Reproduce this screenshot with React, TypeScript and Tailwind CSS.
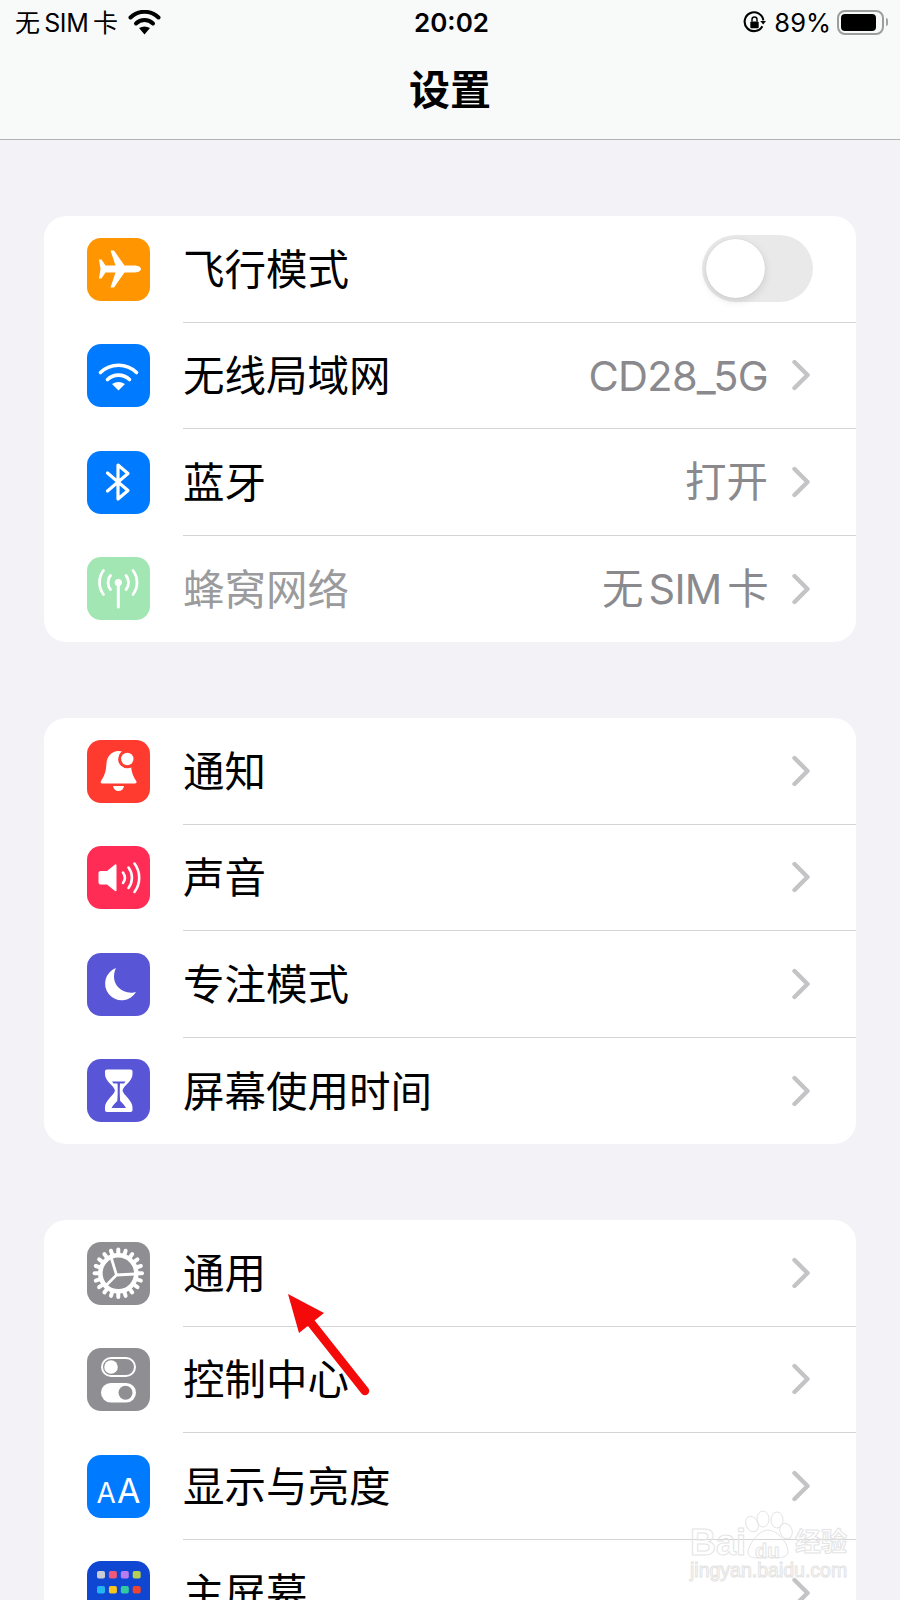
import React from 'react';

// iOS settings icons, all on a 63x63 tile
const Plane = () => (
  <path fill="#fff" d="M54 31C54 28.5 50 27.5 47 27.5H37.5L27 12.5H23.5L28.5 27.5H18.5L14.5 21.5H12L13.5 31L12 40.5H14.5L18.5 34.5H28.5L23.5 49.5H27L37.5 34.5H47C50 34.5 54 33.5 54 31Z" />
);

const Wifi = () => (
  <g fill="none" stroke="#fff" strokeWidth="3.6" strokeLinecap="round">
    <path d="M13.5 28.5A26 26 0 0 1 49.5 28.5" />
    <path d="M20.5 35.5A16 16 0 0 1 42.5 35.5" />
    <path fill="#fff" stroke="none" d="M25 40Q31.5 36 38 40L31.5 46.5Z" />
  </g>
);

const Bluetooth = () => (
  <path fill="none" stroke="#fff" strokeWidth="3.2" strokeLinecap="round" strokeLinejoin="round" d="M20.5 22L41 39.5L31 48V14L41 22.5L20.5 40" />
);

const Antenna = () => (
  <g fill="none" stroke="#fff" strokeWidth="2.8" strokeLinecap="round">
    <circle cx="31.3" cy="25.5" r="3.6" fill="#fff" stroke="none" />
    <path strokeWidth="3" d="M31.3 27V50" />
    <path d="M23.5 18.5A11 11 0 0 0 23.5 32.5" />
    <path d="M39 18.5A11 11 0 0 1 39 32.5" />
    <path d="M16.5 13.5A20 20 0 0 0 16.5 37.5" />
    <path d="M46 13.5A20 20 0 0 1 46 37.5" />
  </g>
);

const Bell = () => (
  <g>
    <path fill="#fff" d="M31.5 11C25 11 20 16 19.5 23C19 31 18 35 14 41C13.2 42.2 14 43.5 15.5 43.5H48C49.4 43.5 50 42.2 49.2 41C46 36 44.5 32 44 26C44 18 38 11 31.5 11Z" />
    <path fill="#fff" d="M26 46H37C36.5 49 34.5 51 31.5 51C28.5 51 26.5 49 26 46Z" />
    <circle cx="40.3" cy="19" r="9.2" fill="#ff3b30" />
    <circle cx="40.3" cy="19" r="6.2" fill="#fff" />
  </g>
);

const Speaker = () => (
  <g>
    <path fill="#fff" d="M13.5 25H20L28 18.5C28.6 18 29.5 18.4 29.5 19.2V44.3C29.5 45.1 28.6 45.5 28 45L20 38.5H13.5C12.4 38.5 11.5 37.6 11.5 36.5V27C11.5 25.9 12.4 25 13.5 25Z" />
    <g fill="none" stroke="#fff" strokeWidth="2.6" strokeLinecap="round">
      <path d="M36 26.5A9 9 0 0 1 36 37" />
      <path d="M41.5 21.5A17 17 0 0 1 41.5 42" />
      <path d="M47.5 17.5A24 24 0 0 1 47.5 46" />
    </g>
  </g>
);

const Moon = () => (
  <path fill="#fff" d="M29 15A16.6 16.6 0 1 0 49 39C47.5 39.5 46 39.7 44 39.7C34 39.7 27 32 27 24C27 20.5 27.6 17.5 29 15Z" />
);

const Hourglass = () => (
  <g>
    <path fill="#fff" d="M20 10.5H43.5C44.8 10.5 45.5 11.3 45.5 12.5V15C45.5 22.5 36.5 26.5 35.5 31.5C36.5 36.5 45.5 41 45.5 48.5V51C45.5 52.2 44.8 53 43.5 53H20C18.7 53 18 52.2 18 51V48.5C18 41 27 36.5 28 31.5C27 26.5 18 22.5 18 15V12.5C18 11.3 18.7 10.5 20 10.5Z" />
    <path fill="#5856d6" d="M25 22.5H38.5L37 24.5H33C32.6 30 32.8 38 33.2 42C35 44 38 46.5 39 49H24.5C25.5 46.5 28.5 44 30.3 42C30.7 38 30.9 30 30.5 24.5H26.5Z" />
  </g>
);

const Gear = () => {
  const teeth = Array.from({ length: 20 }, (_, i) => i * 18);
  return (
    <g fill="none" stroke="#fff">
      <circle cx="31.3" cy="31.3" r="18" strokeWidth="4.6" />
      {teeth.map((a) => (
        <path key={a} d="M31.3 7.6V13" strokeWidth="4" strokeLinecap="round" transform={`rotate(${a} 31.3 31.3)`} />
      ))}
      <path strokeWidth="2.8" d="M29.5 33L24 15M29.5 33L48 32M29.5 33L18 44.5" />
    </g>
  );
};

const Toggles = () => (
  <g>
    <rect x="15" y="10" width="33" height="18" rx="9" fill="none" stroke="#fff" strokeWidth="2" />
    <circle cx="24" cy="19" r="6.8" fill="#fff" />
    <rect x="14" y="35" width="35" height="19.5" rx="9.75" fill="#fff" />
    <circle cx="38.5" cy="44.7" r="7" fill="#8e8e93" />
  </g>
);

const HomeGrid = () => {
  const dots = [
    ['#c9cbd6', '#ef5a7a', '#b77cf0', '#b5cf52'],
    ['#22b4f4', '#f6c61d', '#33c9a3', '#f0442f'],
    ['#f08a24', '#e3d23e', '#58c7ee', '#d65bd6'],
  ];
  return (
    <g>
      {dots.map((row, r) =>
        row.map((c, i) => <rect key={`${r}-${i}`} x={10 + i * 11.9} y={10 + r * 15} width="8" height="7.5" rx="1.8" fill={c} />)
      )}
    </g>
  );
};

const Tile = ({ bg, children }: { bg: string; children: React.ReactNode }) => (
  <div className={`w-[63px] h-[63px] rounded-[14px] shrink-0 flex items-center justify-center ${bg}`}>{children}</div>
);

const Svg = ({ children }: { children: React.ReactNode }) => (
  <svg width="63" height="63" viewBox="0 0 63 63">{children}</svg>
);

const Chevron = () => (
  <svg width="20" height="32" viewBox="0 0 20 32" className="shrink-0">
    <path d="M3.5 3L16.5 16L3.5 29" fill="none" stroke="#c4c4c7" strokeWidth="4.4" strokeLinecap="round" strokeLinejoin="round" />
  </svg>
);

const Row = ({
  icon,
  label,
  value,
  valueClass,
  dim,
  last,
  right,
}: {
  icon: React.ReactNode;
  label: string;
  value?: string;
  valueClass?: string;
  dim?: boolean;
  last?: boolean;
  right?: React.ReactNode;
}) => (
  <div className="flex items-center h-[106.5px] pl-[43px]">
    {icon}
    <div className={`flex-1 h-full ml-[33px] pr-[45px] flex items-center justify-between ${last ? '' : 'border-b border-[#d4d4d7]'}`}>
      <span className={`pt-[3px] ${dim ? 'text-[#9b9b9d]' : 'text-black'}`}>{label}</span>
      {right ?? (
        <div className="flex items-center gap-[23px]">
          {value && <span className={`pt-[2px] text-[#8a8a8e] ${valueClass ?? ''}`}>{value}</span>}
          <Chevron />
        </div>
      )}
    </div>
  </div>
);

const Card = ({ children }: { children: React.ReactNode }) => (
  <div className="mx-[44px] w-[812px] bg-white rounded-[22px] overflow-hidden text-[41.5px] leading-none shrink-0">{children}</div>
);

const Switch = () => (
  <div className="w-[111px] h-[67px] rounded-full bg-[#e9e9ea] p-[4px] -mr-[2px]">
    <div className="w-[59px] h-[59px] rounded-full bg-white shadow-[0_3px_8px_rgba(0,0,0,0.12),0_0_1px_rgba(0,0,0,0.15)]" />
  </div>
);

function StatusBar() {
  return (
    <div className="grid grid-cols-[1fr_auto_1fr] items-center h-[44px] pl-[15px] pr-[12px] text-black text-[25px] leading-none">
      <div className="flex items-center gap-[10px]">
        <span className="pt-[2px] tracking-[-0.4px] [word-spacing:-2px]">无 SIM 卡</span>
        <svg width="33" height="25" viewBox="0 0 33 25">
          <g fill="none" stroke="#000" strokeWidth="4" strokeLinecap="round">
            <path d="M2.5 7.5A20 20 0 0 1 30.5 7.5" />
            <path d="M8 13.5A12 12 0 0 1 25 13.5" />
          </g>
          <path d="M11 18Q16.5 15 22 18L16.5 24.5Z" />
        </svg>
      </div>
      <span className="font-semibold text-[26px] pt-[1px]">20:02</span>
      <div className="flex items-center justify-end gap-[6px]">
        <svg width="23" height="23" viewBox="0 0 22 22" className="mr-[2px]">
          <path d="M18.5 14.5A9 9 0 1 1 19.5 9" fill="none" stroke="#000" strokeWidth="2" />
          <path d="M16.5 9.5H22L19.3 13Z" />
          <rect x="7" y="10" width="8" height="6.5" rx="1" />
          <path d="M8.6 10V8.2A2.4 2.4 0 0 1 13.4 8.2V10" fill="none" stroke="#000" strokeWidth="1.4" />
        </svg>
        <span className="text-[25.5px] pt-[1px]">89%</span>
        <div className="flex items-center gap-[2px]">
          <div className="w-[47px] h-[25px] rounded-[8px] border-2 border-[#9d9d9d] p-[2px]">
            <div className="w-[35px] h-full rounded-[4px] bg-black" />
          </div>
          <div className="w-[2px] h-[8px] rounded-r-full bg-[#a5a5a5]" />
        </div>
      </div>
    </div>
  );
}

export default function App() {
  return (
    <div className="relative w-[900px] h-[1600px] overflow-hidden bg-[#f2f2f7] font-['Inter','Noto_Sans_CJK_SC',sans-serif]">
      <header className="h-[140px] bg-[#f8f9f9] border-b border-[#b4b4b4] flex flex-col">
        <StatusBar />
        <h1 className="text-center text-[41px] leading-none font-bold text-black mt-[26px]">设置</h1>
      </header>

      <main className="pt-[76px] flex flex-col gap-[76px]">
        <Card>
          <Row icon={<Tile bg="bg-[#ff9500]"><Svg><Plane /></Svg></Tile>} label="飞行模式" right={<Switch />} />
          <Row icon={<Tile bg="bg-[#007aff]"><Svg><Wifi /></Svg></Tile>} label="无线局域网" value="CD28_5G" valueClass="tracking-[-0.7px]" />
          <Row icon={<Tile bg="bg-[#007aff]"><Svg><Bluetooth /></Svg></Tile>} label="蓝牙" value="打开" />
          <Row icon={<Tile bg="bg-[#a1e6b3]"><Svg><Antenna /></Svg></Tile>} label="蜂窝网络" value="无 SIM 卡" valueClass="tracking-[-0.8px] [word-spacing:-5px]" dim last />
        </Card>
        <Card>
          <Row icon={<Tile bg="bg-[#ff3b30]"><Svg><Bell /></Svg></Tile>} label="通知" />
          <Row icon={<Tile bg="bg-[#ff2d55]"><Svg><Speaker /></Svg></Tile>} label="声音" />
          <Row icon={<Tile bg="bg-[#5856d6]"><Svg><Moon /></Svg></Tile>} label="专注模式" />
          <Row icon={<Tile bg="bg-[#5856d6]"><Svg><Hourglass /></Svg></Tile>} label="屏幕使用时间" last />
        </Card>
        <Card>
          <Row icon={<Tile bg="bg-[#8e8e93]"><Svg><Gear /></Svg></Tile>} label="通用" />
          <Row icon={<Tile bg="bg-[#8e8e93]"><Svg><Toggles /></Svg></Tile>} label="控制中心" />
          <Row
            icon={
              <Tile bg="bg-[#007aff]">
                <span className="flex items-baseline gap-[1px] text-white font-normal leading-none pt-[10px]">
                  <span className="text-[28px]">A</span>
                  <span className="text-[34px]">A</span>
                </span>
              </Tile>
            }
            label="显示与亮度"
          />
          <Row icon={<Tile bg="bg-[#0f46d2]"><Svg><HomeGrid /></Svg></Tile>} label="主屏幕" last />
        </Card>
      </main>

      {/* red arrow drawn over the list */}
      <svg className="absolute left-[280px] top-[1285px]" width="100" height="120" viewBox="0 0 100 120">
        <path d="M8 9L44 28L19 48Z" fill="#f50a0a" />
        <path d="M28 34L85 106" stroke="#f50a0a" strokeWidth="8.5" strokeLinecap="round" />
      </svg>

      {/* baidu watermark */}
      <div className="absolute left-[690px] top-[1510px] w-[166px] h-[72px] text-transparent [-webkit-text-stroke:1px_#e4e4e4] font-['Liberation_Sans',sans-serif]">
        <svg className="absolute left-[50px] top-0" width="60" height="52" viewBox="0 0 60 52" fill="none" stroke="#e4e4e4">
          <ellipse cx="12" cy="14" rx="6" ry="8" transform="rotate(-25 12 14)" />
          <ellipse cx="23" cy="9" rx="6" ry="8" />
          <ellipse cx="37" cy="10" rx="6" ry="8" />
          <ellipse cx="46" cy="21" rx="6" ry="8" transform="rotate(-20 46 21)" />
          <path d="M28 20C18 20 8 36 8 42C8 48 14 49 28 47C42 49 48 47 48 41C48 34 38 20 28 20Z" />
        </svg>
        <span className="absolute left-0 top-[15px] text-[36px] leading-none font-bold">Bai</span>
        <span className="absolute left-[65px] top-[31px] text-[20px] leading-none font-bold">du</span>
        <span className="absolute left-[105px] top-[17px] text-[26px] leading-none font-bold font-['Noto_Sans_CJK_SC',sans-serif]">经验</span>
        <span className="absolute left-0 top-[51px] text-[19.5px] leading-none">jingyan.baidu.com</span>
      </div>
    </div>
  );
}
